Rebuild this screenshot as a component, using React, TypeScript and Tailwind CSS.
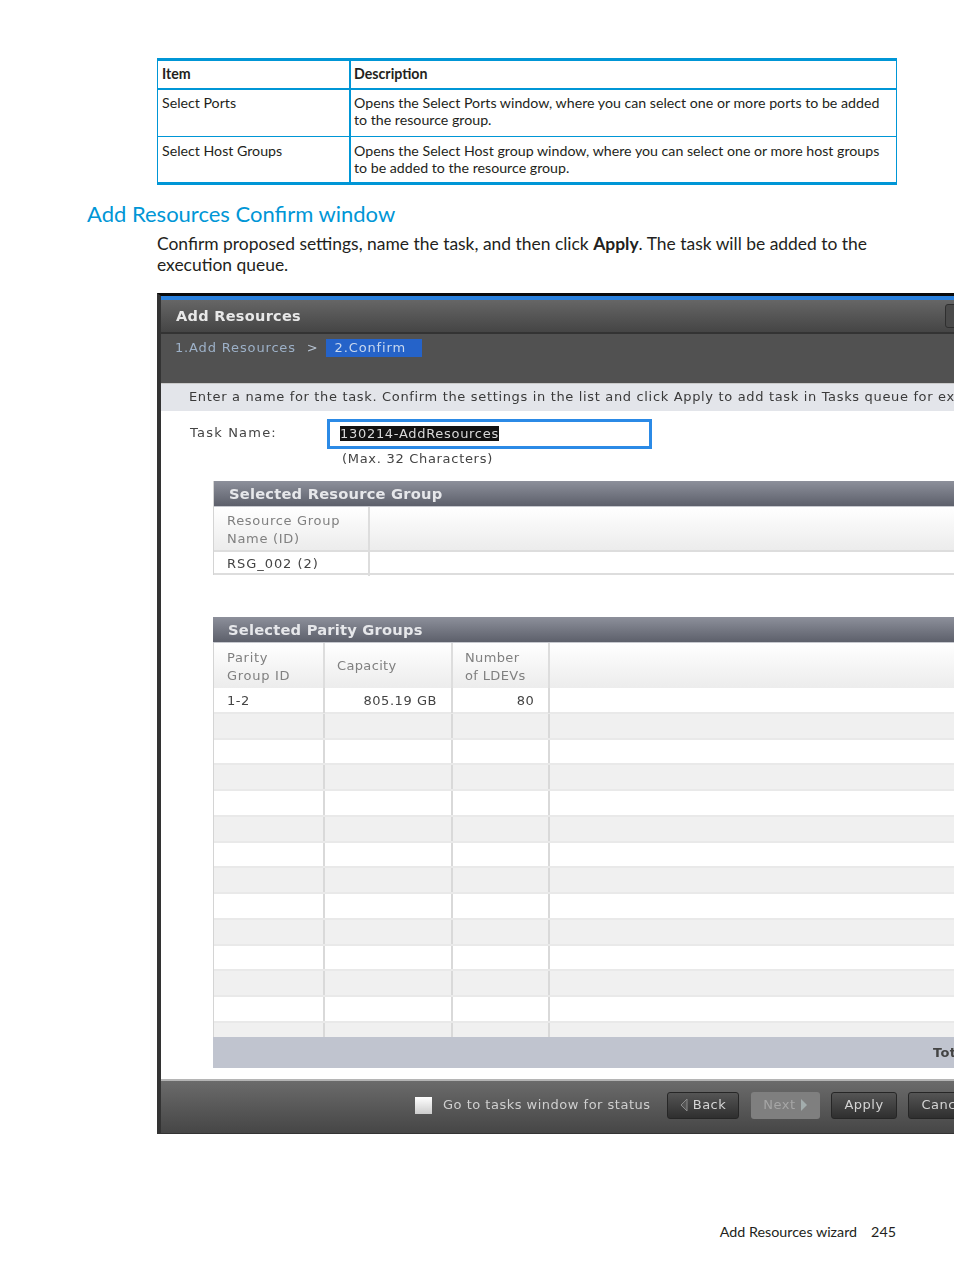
const docFont = "font-['Lato','Open_Sans',sans-serif]";
const uiFont = "font-['DejaVu_Sans',sans-serif]";

const blankRows = Array.from({ length: 12 }, (_, i) => i);

function GridRow({ shade, children }: { shade: boolean; children?: React.ReactNode }) {
  return (
    <div className={`grid grid-cols-[111px_128px_97px_1fr] h-[25.75px] border-b-2 border-[#e9e9e9] ${shade ? 'bg-[#f0f0f0]' : 'bg-white'}`}>
      {children ?? (
        <>
          <div className="border-r-2 border-[#d9d9d9]" />
          <div className="border-r-2 border-[#d9d9d9]" />
          <div className="border-r-2 border-[#d9d9d9]" />
          <div />
        </>
      )}
    </div>
  );
}

function PanelTitle({ title }: { title: string }) {
  return (
    <div className="h-[26px] bg-gradient-to-b from-[#8d909b] to-[#5d606b] pl-[15px] pt-[2px] border-b border-[#c6c8ce] flex items-center">
      <span className="text-[14.7px] font-bold tracking-[0.2px] text-[#e6e7ea]">{title}</span>
    </div>
  );
}

function FootButton({ label, width, disabled, children }: { label: string; width: string; disabled?: boolean; children?: React.ReactNode }) {
  return (
    <div className={`${width} h-[27px] rounded-[3px] flex items-center justify-center gap-1 text-[13px] tracking-[0.5px] ${disabled ? 'bg-[#7f7f7f] text-[#a6a6a6]' : 'bg-gradient-to-b from-[#555555] to-[#2f2f2f] border border-[#262626] text-[#d4d4d4]'}`}>
      {children}
      {label}
    </div>
  );
}

export default function App() {
  return (
    <div className={`w-[954px] h-[1271px] bg-white overflow-hidden pt-[58px] text-[#231f20] ${docFont}`}>
      {/* item table */}
      <div className="ml-[157px] w-[740px] border-t-[3px] border-b-[3px] border-x border-[#0096d6] text-[14.2px] leading-[17px]">
        <div className="grid grid-cols-[193px_1fr] h-[29px] border-b-2 border-[#0096d6] font-bold items-stretch">
          <div className="border-r-2 border-[#0096d6] pl-1 pt-[4px]">Item</div>
          <div className="pl-[3px] pt-[4px]">Description</div>
        </div>
        <div className="grid grid-cols-[193px_1fr] h-[47px] border-b border-[#0096d6]">
          <div className="border-r-2 border-[#0096d6] pl-1 pt-[4px]">Select Ports</div>
          <div className="pl-[3px] pt-[4px]">Opens the Select Ports window, where you can select one or more ports to be added<br />to the resource group.</div>
        </div>
        <div className="grid grid-cols-[193px_1fr] h-[45px]">
          <div className="border-r-2 border-[#0096d6] pl-1 pt-[5px]">Select Host Groups</div>
          <div className="pl-[3px] pt-[5px]">Opens the Select Host group window, where you can select one or more host groups<br />to be added to the resource group.</div>
        </div>
      </div>

      <h2 className="ml-[87px] mt-[13px] h-[32px] text-[22px] leading-[32px] text-[#0096d6]">Add Resources Confirm window</h2>
      <p className="ml-[157px] mt-[4px] w-[740px] text-[17.45px] leading-[20.5px]">
        Confirm proposed settings, name the task, and then click <b>Apply</b>. The task will be added to the<br />execution queue.
      </p>

      {/* wizard screenshot */}
      <div className="ml-[157px] mt-[18px] w-[797px] h-[841px] overflow-hidden">
        <div className={`w-[840px] h-[841px] bg-[#3a3a3a] border-l-[4px] border-t-[3px] border-l-[#333333] border-t-[#0a0a0a] blur-[0.6px] ${uiFont}`}>
          <div className="h-[4px] bg-[#2a80dc]" />
          <div className="h-[34px] bg-gradient-to-b from-[#666666] to-[#454545] border-b-2 border-[#333333] pl-[15px] pr-[36px] flex items-center justify-between">
            <span className="mt-[2px] text-[14.5px] font-bold tracking-[0.3px] text-[#e8e8e8]">Add Resources</span>
            <div className="w-[16px] h-[24px] rounded-[3px] bg-[#4a4a4a] border border-[#2f2f2f]" />
          </div>
          <div className="h-[49px] bg-[#515151] pl-[14px] pt-[4px] flex items-start text-[13px] tracking-[0.85px] text-[#9db1c8]">
            <span>1.Add Resources</span>
            <span className="ml-[11px] text-[#b8c4d2]">&gt;</span>
            <span className="ml-[7px] mt-[1px] w-[96px] h-[18px] pl-[9px] bg-[#2563c9] text-[#c9d8ee] leading-[17px]">2.Confirm</span>
          </div>
          <div className="h-[698px] bg-white border-t border-[#c9c9c9]">
            <div className="h-[27px] bg-[#e3e5ea] pl-[28px] pb-[2px] flex items-center text-[13px] tracking-[0.66px] text-[#3a3a3a] whitespace-nowrap">
              Enter a name for the task. Confirm the settings in the list and click Apply to add task in Tasks queue for execution.
            </div>
            <div className="flex pl-[29px] pt-[8px] h-[70px]">
              <span className="w-[137px] pt-[4px] text-[13px] tracking-[1.2px] text-[#444444]">Task Name:</span>
              <div>
                <div className="w-[325px] h-[30px] border-[3px] border-[#2b8ae6] bg-white pl-[10px] pb-[2px] flex items-center">
                  <span className="bg-[#111111] text-[#d8d8d8] text-[13px] tracking-[0.7px] leading-[15px]">130214-AddResources</span>
                </div>
                <div className="mt-[2px] pl-[15px] text-[13px] leading-[16px] tracking-[0.7px] text-[#444444]">(Max. 32 Characters)</div>
              </div>
            </div>

            {/* selected resource group */}
            <div className="ml-[52px] border-l border-[#d4d4d4]">
              <PanelTitle title="Selected Resource Group" />
              <div className="grid grid-cols-[156px_1fr] h-[45px] border-b-2 border-[#dddddd] bg-gradient-to-b from-white to-[#ececec]">
                <div className="border-r-2 border-[#dddddd] pl-[13px] pt-[5px] text-[13px] leading-[18px] tracking-[0.7px] text-[#808080]">Resource Group<br />Name (ID)</div>
                <div />
              </div>
              <div className="grid grid-cols-[156px_1fr] h-[23px] border-b-2 border-[#dddddd]">
                <div className="border-r-2 border-[#dddddd] pl-[13px] text-[13px] leading-[24px] tracking-[0.95px] text-[#444444]">RSG_002 (2)</div>
                <div />
              </div>
            </div>

            {/* selected parity groups */}
            <div className="ml-[52px] mt-[42px]">
              <PanelTitle title="Selected Parity Groups" />
              <div className="grid grid-cols-[111px_128px_97px_1fr] h-[45px] bg-gradient-to-b from-white to-[#ececec] text-[13px] leading-[18px] tracking-[0.35px] text-[#808080] border-l border-[#d4d4d4]">
                <div className="border-r-2 border-[#dddddd] pl-[13px] pt-[6px] tracking-[0.7px]">Parity<br />Group ID</div>
                <div className="border-r-2 border-[#dddddd] pl-[12px] flex items-center">Capacity</div>
                <div className="border-r-2 border-[#dddddd] pl-[12px] pt-[6px]">Number<br />of LDEVs</div>
                <div />
              </div>
              <div className="border-l border-[#d4d4d4]">
                <GridRow shade={false}>
                  <div className="border-r-2 border-[#d9d9d9] pl-[13px] text-[13px] leading-[25px] tracking-[0.5px] text-[#444444]">1-2</div>
                  <div className="border-r-2 border-[#d9d9d9] pr-[14px] text-right text-[13px] leading-[25px] tracking-[0.55px] text-[#444444]">805.19 GB</div>
                  <div className="border-r-2 border-[#d9d9d9] pr-[14px] text-right text-[13px] leading-[25px] tracking-[0.3px] text-[#444444]">80</div>
                  <div />
                </GridRow>
                {blankRows.map(i => (
                  <GridRow key={i} shade={i % 2 === 0} />
                ))}
                <div className="grid grid-cols-[111px_128px_97px_1fr] h-[14px] bg-[#f0f0f0]">
                  <div className="border-r-2 border-[#d9d9d9]" />
                  <div className="border-r-2 border-[#d9d9d9]" />
                  <div className="border-r-2 border-[#d9d9d9]" />
                  <div />
                </div>
              </div>
              <div className="h-[31px] bg-[#c0c4cf] pl-[720px] flex items-center text-[13px] font-bold tracking-[0.3px] text-[#444444] whitespace-nowrap">Total: 1</div>
            </div>
          </div>
          <div className="h-[2px] bg-[#b5b5b5] -mt-[2px]" />
          <div className="h-[53px] bg-gradient-to-b from-[#6b6b6b] to-[#464646] border-b border-[#333333] pl-[254px] pb-[4px] flex items-center text-[13px] tracking-[0.5px] text-[#cfcfcf] whitespace-nowrap">
            <div className="w-[17px] h-[17px] bg-gradient-to-b from-white to-[#cccccc]" />
            <span className="ml-[11px] mr-[15px] w-[209px]">Go to tasks window for status</span>
            <FootButton label="Back" width="w-[72px]">
              <svg width="8" height="14" viewBox="0 0 8 14" className="mr-[1px]"><path d="M7 1 1 7l6 6z" fill="#555555" stroke="#8a8a8a" /></svg>
            </FootButton>
            <div className="ml-[12px]">
              <FootButton label="Next" width="w-[69px]" disabled>
                <span className="order-last"><svg width="8" height="14" viewBox="0 0 8 14"><path d="M1 1l6 6-6 6z" fill="#a3adad" /></svg></span>
              </FootButton>
            </div>
            <div className="ml-[11px]"><FootButton label="Apply" width="w-[66px]" /></div>
            <div className="ml-[11px]"><FootButton label="Cancel" width="w-[74px]" /></div>
          </div>
        </div>
      </div>

      <div className="mt-[88px] ml-[157px] w-[739px] flex justify-end gap-[14px] text-[14.3px] leading-[20px]">
        <span>Add Resources wizard</span>
        <span>245</span>
      </div>
    </div>
  );
}
